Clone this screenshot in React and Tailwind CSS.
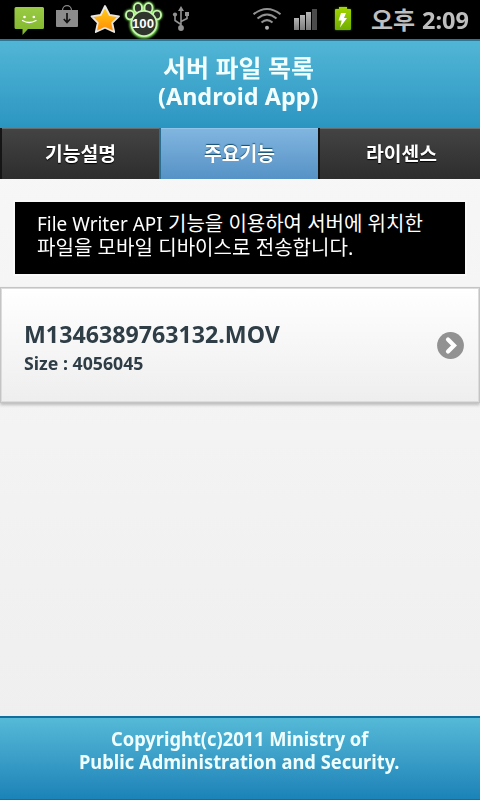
import React, { useLayoutEffect, useRef, useState } from 'react';

const FONT = "font-['Noto_Sans','Noto_Sans_CJK_KR',sans-serif]";

// A single line of text, condensed or widened to an exact width.
function Line({ children, width, className = '' }) {
  const ref = useRef(null);
  const [scale, setScale] = useState(1);
  useLayoutEffect(() => {
    setScale(width / ref.current.offsetWidth);
  }, [width]);
  return (
    <span className={'block whitespace-nowrap ' + className} style={{ width }}>
      <span ref={ref} className="inline-block origin-left align-top" style={{ transform: `scaleX(${scale})` }}>{children}</span>
    </span>
  );
}

function StatusIcons() {
  return (
    <svg width="360" height="39" viewBox="0 0 360 39" className="shrink-0" aria-hidden="true">
      <defs>
        <linearGradient id="msg" x1="0" y1="0" x2="0" y2="1">
          <stop offset="0" stopColor="#9bcb45" /><stop offset="1" stopColor="#7fb52b" />
        </linearGradient>
        <linearGradient id="star" x1="0" y1="0" x2="0" y2="1">
          <stop offset="0" stopColor="#ffd21f" /><stop offset="1" stopColor="#ff8a00" />
        </linearGradient>
        <linearGradient id="grey" x1="0" y1="0" x2="0" y2="1">
          <stop offset="0" stopColor="#b5b5b5" /><stop offset="1" stopColor="#7c7c7c" />
        </linearGradient>
        <linearGradient id="batt" x1="0" y1="0" x2="0" y2="1">
          <stop offset="0" stopColor="#a3d600" /><stop offset="1" stopColor="#6fae00" />
        </linearGradient>
        <filter id="glow" x="-30%" y="-30%" width="160%" height="160%"><feGaussianBlur stdDeviation="1.1" /></filter>
      </defs>
      {/* message */}
      <path d="M16 7H42.500Q44 7 44 8.500V27.500Q44 29 42.500 29H28L22.500 35V29H16Q14.500 29 14.500 27.500V8.500Q14.500 7 16 7Z" fill="url(#msg)" />
      <circle cx="24.500" cy="17" r="1.300" fill="#fff" /><circle cx="33.800" cy="17" r="1.300" fill="#fff" />
      <path d="M22.500 20.500Q29 24.500 36 20.500" fill="none" stroke="#fff" strokeWidth="1.300" strokeLinecap="round" />
      {/* download bag */}
      <path d="M62.500 10.500C62.500 4 71.500 4 71.500 10.500" fill="none" stroke="#8b8b8b" strokeWidth="1.200" />
      <path d="M56 10H78V26Q78 27 77 27H57Q56 27 56 26Z" fill="#8b8b8b" />
      <path d="M67 13V22M63.800 19L67 22.500L70.200 19" fill="none" stroke="#111" strokeWidth="1.700" />
      {/* star */}
      <path d="M105 6L109.600 15L119 16.300L112.200 22.800L114.200 32L105 27.700L95.800 32L97.800 22.800L91.500 16.300L100.700 15Z" fill="url(#star)" stroke="#e9e6e6" strokeWidth="1.800" strokeLinejoin="round" />
      {/* paw */}
      <g fill="#7ee35b" filter="url(#glow)">
        <ellipse cx="130" cy="15" rx="5.400" ry="5.500" /><ellipse cx="138" cy="8" rx="5.400" ry="6.200" />
        <ellipse cx="148.500" cy="8" rx="5.400" ry="6.200" /><ellipse cx="157" cy="15" rx="5.400" ry="5.500" />
        <circle cx="144" cy="24" r="14.500" />
      </g>
      <g fill="#30352e" stroke="#c6f5ac" strokeWidth="1.800">
        <ellipse cx="130" cy="15" rx="4" ry="4.300" /><ellipse cx="138" cy="8" rx="4" ry="4.900" />
        <ellipse cx="148.500" cy="8" rx="4" ry="4.900" /><ellipse cx="157" cy="15" rx="4" ry="4.300" />
        <circle cx="144" cy="23.500" r="12.600" />
      </g>
      <text x="143" y="28" textAnchor="middle" textLength="22" lengthAdjust="spacingAndGlyphs" className="font-['Liberation_Sans',sans-serif] text-[13px] font-bold" fill="#fff">100</text>
      {/* usb */}
      <g fill="none" stroke="#929292" strokeWidth="1.600">
        <path d="M181 9V28M181 24.500L175 20.500V14M181 21.500L187 18.500V14" />
      </g>
      <path d="M181 6L184 11H178Z" fill="#929292" /><circle cx="181" cy="28" r="2.900" fill="#929292" />
      <circle cx="175" cy="14.500" r="2.100" fill="#929292" /><path d="M185 12H189V16H185Z" fill="#929292" />
      {/* wifi */}
      <g fill="none" stroke="#929292" strokeWidth="2">
        <path d="M253.500 14.300Q267 3.700 280.500 14.300" /><path d="M257.500 18.500Q267 10.500 276.500 18.500" /><path d="M261.500 22.500Q267 17.700 272.500 22.500" />
      </g>
      <circle cx="267" cy="27.800" r="2" fill="#b0b0b0" />
      {/* signal */}
      <g fill="url(#grey)">
        <rect x="294" y="18" width="5" height="12" /><rect x="300" y="15" width="5" height="15" /><rect x="306" y="12" width="5" height="18" />
      </g>
      <rect x="312" y="9" width="5" height="21" fill="#4b4b4b" />
      {/* battery */}
      <path d="M336 9H339V7H347V9H350Q351 9 351 10V29Q351 30 350 30H336Q335 30 335 29V10Q335 9 336 9Z" fill="#7ab800" filter="url(#glow)" opacity=".55" />
      <path d="M336 9H339V7H347V9H350Q351 9 351 10V29Q351 30 350 30H336Q335 30 335 29V10Q335 9 336 9Z" fill="url(#batt)" />
      <path d="M341 13H346L344 18H347L340 27.500L341.700 20.500H338.500Z" fill="#fff" />
    </svg>
  );
}

function Tab({ label, active, className }) {
  return (
    <div className={'flex h-full items-center justify-center text-[19px] font-bold text-white ' + className + (active
      ? ' border-l-2 border-[#2a6d91] bg-gradient-to-b from-[#81b6e0] to-[#5692c6] shadow-[inset_0_1px_0_#91c4e6] [text-shadow:0_-1px_1px_#145072]'
      : ' border-l-2 border-[#151515] bg-gradient-to-b from-[#444] to-[#2d2d2d] shadow-[inset_0_1px_0_#656c6b] [text-shadow:0_1px_1px_#000]')}>
      <Line width={71} className="leading-[24px]">{label}</Line>
    </div>
  );
}

export default function App() {
  return (
    <div className={'flex h-[800px] w-[480px] flex-col overflow-hidden bg-gradient-to-b from-[#f9f9f9] to-[#eee] ' + FONT}>
      <div className="flex h-[39px] shrink-0 items-center bg-black">
        <StatusIcons />
        <Line width={44} className="ml-[11px] text-[24px] font-bold leading-[39px] text-[#bebebe]">오후</Line>
        <Line width={47} className="ml-[7px] text-[24px] font-bold leading-[39px] text-[#bebebe]">2:09</Line>
      </div>
      <header className="flex h-[89px] shrink-0 flex-col items-center border-t-2 border-[#2b7795] bg-gradient-to-b from-[#51b6d6] to-[#2b95c1] pt-[13px] pr-[4px] text-[24px] font-bold leading-[28px] text-[#f2ffff]">
        <Line width={151}>서버 파일 목록</Line>
        <Line width={160}>(Android App)</Line>
      </header>
      <nav className="flex h-[51px] shrink-0">
        <Tab label="기능설명" className="w-[159px]" />
        <Tab label="주요기능" active className="w-[159px]" />
        <Tab label="라이센스" className="flex-1 pl-[2px]" />
      </nav>
      <main className="flex min-h-0 flex-1 flex-col">
        <div className="mx-[15px] mt-[23px] h-[72px] shrink-0 bg-black pt-[10px] pl-[22px] text-[20px] leading-[24px] text-white shadow-[0_0_0_2px_#fafafa]">
          <div className="flex">
            <Line width={126}>File Writer API</Line>
            <Line width={255} className="ml-[5px]">기능을 이용하여 서버에 위치한</Line>
          </div>
          <Line width={316}>파일을 모바일 디바이스로 전송합니다.</Line>
        </div>
        <div className="mt-[13px] flex h-[116px] shrink-0 items-center justify-between border border-[#c4c4c4] bg-gradient-to-b from-white to-[#eee] pr-[15px] pl-[23px] font-bold text-[#2f3e46] shadow-[inset_0_0_0_1px_#dcdcdc,0_2px_3px_#bbb]">
          <div className="pt-[6px]">
            <Line width={256} className="text-[24px] leading-[30px]">M1346389763132.MOV</Line>
            <Line width={119} className="text-[18px] leading-[28px]">Size : 4056045</Line>
          </div>
          <svg width="27" height="27" viewBox="0 0 27 27" aria-hidden="true">
            <circle cx="13.500" cy="13.500" r="13.400" fill="#929292" />
            <path d="M11 7.500L17 13.500L11 19.500" fill="none" stroke="#fff" strokeWidth="4.200" strokeLinecap="round" />
          </svg>
        </div>
      </main>
      <footer className="flex h-[84px] shrink-0 flex-col items-center border-t-2 border-b border-[#116f9e] bg-gradient-to-b from-[#55b9d7] to-[#1b83b8] pt-[10px] pr-px text-[19px] font-bold leading-[23px] text-[#efffff]">
        <Line width={257}>Copyright(c)2011 Ministry of</Line>
        <Line width={321}>Public Administration and Security.</Line>
      </footer>
    </div>
  );
}
